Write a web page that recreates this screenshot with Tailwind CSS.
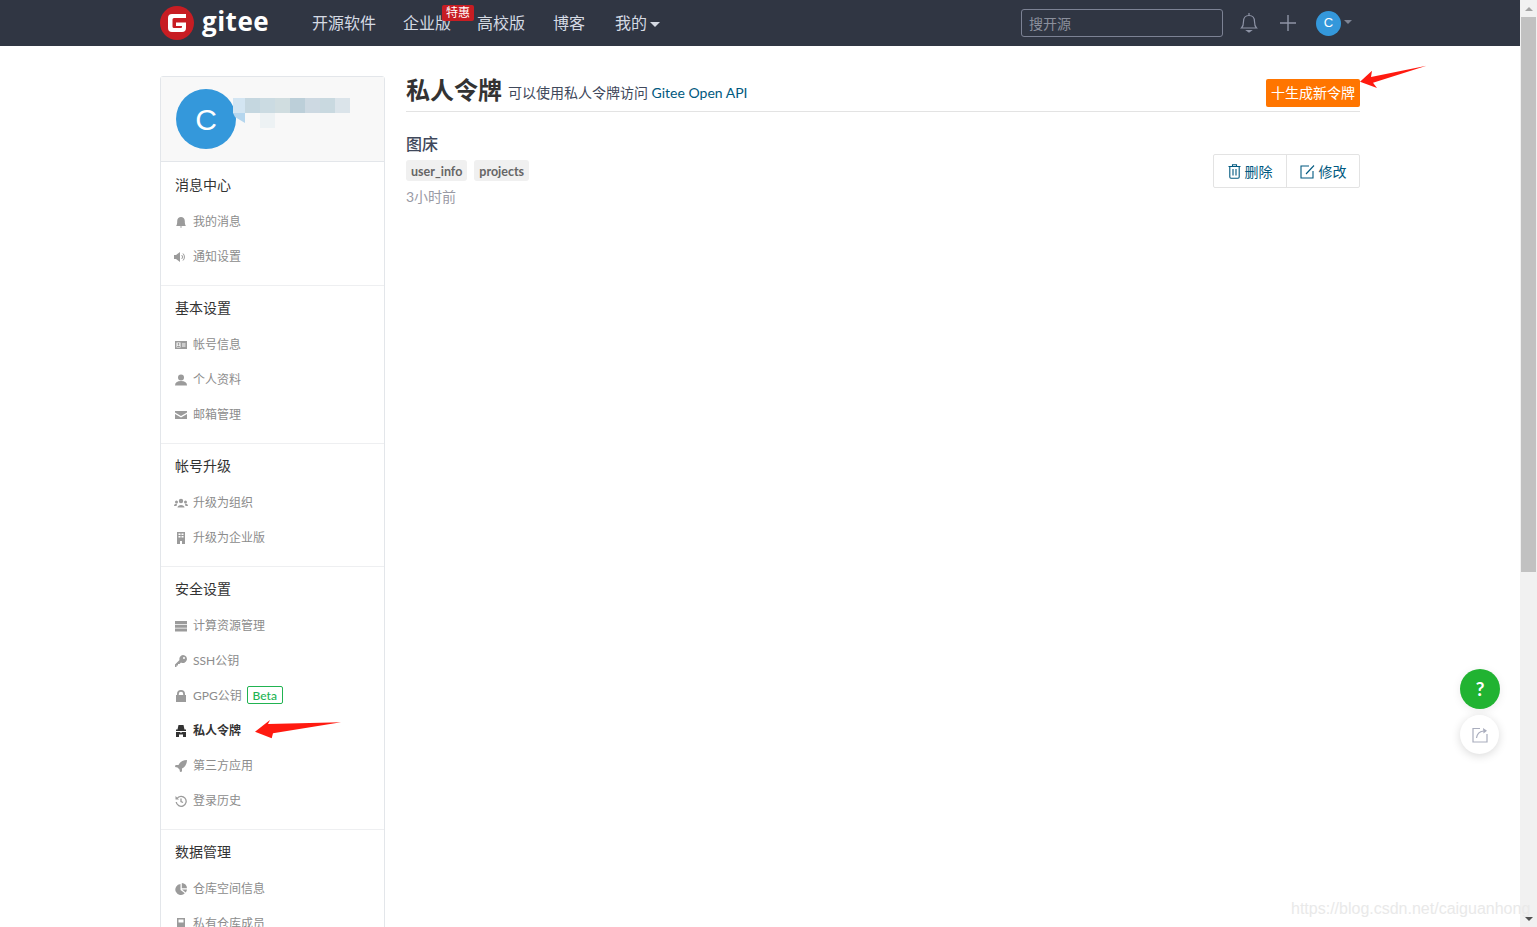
<!DOCTYPE html>
<html lang="zh-CN">
<head>
  <meta charset="UTF-8" />
  <title>私人令牌</title>
  <script src="https://cdn.jsdelivr.net/npm/@tailwindcss/browser@4"></script>
</head>
<body class="h-[927px] overflow-hidden bg-white font-['Lato','Noto_Sans_CJK_SC',sans-serif]">
  <div class="relative flex h-[927px] overflow-hidden">
    <div class="w-[1520px] shrink-0">
      <!-- Navbar -->
      <header class="flex h-[46px] items-center bg-[#303643] pl-[160px] pr-[168px] text-[16px] text-[#d5dae3]">
        <svg class="h-[34px] w-[34px] shrink-0" viewBox="0 0 34 34">
          <circle cx="17" cy="17" r="17" fill="#c71d23"/>
          <path d="M8 12a4 4 0 0 1 4-4h14v4H14a1.500 1.500 0 0 0-1.500 1.500v7A1.500 1.500 0 0 0 14 22h7a1 1 0 0 0 1-1v-1h-6v-3.500h10V22a4 4 0 0 1-4 4H12a4 4 0 0 1-4-4z" fill="#fff"/>
        </svg>
        <span class="ml-2 -mt-[5px] w-[110px] text-[26px] leading-[34px] font-bold tracking-[0.5px] text-white font-['Open_Sans',sans-serif]">gitee</span>
        <nav class="flex items-center">
          <a class="w-[91px]">开源软件</a>
          <a class="relative w-[74px]">企业版
            <span class="absolute left-[39px] top-[-6px] h-[16px] w-[32px] rounded-[2px] bg-[#c71d23] text-center text-[12px] leading-[16px] text-white">特惠</span>
          </a>
          <a class="w-[76px]">高校版</a>
          <a class="w-[62px]">博客</a>
          <a class="flex items-center">我的<span class="ml-[3px] mt-[3px] border-x-[5px] border-t-[5px] border-x-transparent border-t-[#d5dae3]"></span></a>
        </nav>
        <div class="ml-auto flex items-center">
          <div class="flex h-[28px] w-[202px] items-center rounded-[3px] border border-[#7c8294] pl-[7px] text-[14px] text-[#8b909c]">搜开源</div>
          <svg class="mb-[2px] ml-[17px] h-[22px] w-[18px] shrink-0" viewBox="0 0 18 22" fill="none" stroke="#8e94a6" stroke-width="1.2">
            <path d="M1.500 17c1.500-1.500 2-3 2-6.500 0-3.500 2-6 5.500-6s5.500 2.500 5.500 6c0 3.500.5 5 2 6.500z"/>
            <path d="M9 4.500V2"/>
            <path d="M7 19.500h4l-2 1.500z" fill="#8e94a6"/>
          </svg>
          <svg class="ml-[21px] h-[18px] w-[18px] shrink-0" viewBox="0 0 18 18" stroke="#8e94a6" stroke-width="1.400"><path d="M9 1v16M1 9h16"/></svg>
          <div class="ml-[19px] flex h-[25px] w-[25px] items-center justify-center rounded-full bg-[#3498db] text-[13px] text-white font-['Liberation_Sans',sans-serif]">C</div>
          <span class="ml-[3px] mb-[3px] border-x-[4px] border-t-[4px] border-x-transparent border-t-[#7d8393]"></span>
        </div>
      </header>

      <div class="flex items-start pl-[160px] pt-[30px]">
        <!-- Sidebar -->
        <aside class="h-[900px] w-[225px] shrink-0 rounded-t-[3px] border border-[#e3e6ea] text-[12px] text-[#8c8c8c]">
          <div class="relative flex h-[85px] items-center border-b border-[#e3e6ea] bg-[#f8f8f8] pl-[15px]">
            <div class="flex h-[60px] w-[60px] items-center justify-center rounded-full bg-[#3498db] text-[30px] text-white font-['Liberation_Sans',sans-serif]">C</div>
            <!-- pixelated username -->
            <div class="absolute left-[72px] top-[21px] flex h-[15px]">
              <span class="w-[12px] bg-[#d3e5f2]"></span><span class="w-[15px] bg-[#c5d7e0]"></span><span class="w-[15px] bg-[#cbdbe2]"></span><span class="w-[15px] bg-[#d0dde0]"></span><span class="w-[15px] bg-[#bccfd9]"></span><span class="w-[15px] bg-[#cdd9e2]"></span><span class="w-[15px] bg-[#c9d9e0]"></span><span class="w-[15px] bg-[#dbe4ea]"></span>
            </div>
            <div class="absolute left-[99px] top-[36px] h-[15px] w-[15px] bg-[#edf2f4]"></div>
            <svg class="absolute left-[72px] top-[36px] h-[10px] w-[12px]" viewBox="0 0 12 10"><path d="M0 0h12v10L2 4z" fill="#b5d6ee"/></svg>
          </div>

          <section class="px-[14px] pb-[11px] pt-[11px]">
            <h3 class="mb-[7px] text-[14px] leading-[24px] text-[#333]">消息中心</h3>
            <a class="flex h-[35px] items-center">
              <svg class="mr-[6px] h-[12px] w-[12px] shrink-0" viewBox="0 0 12 12" fill="#9b9b9b"><path d="M1 10c1-1 1.200-2.500 1.200-5C2.200 2.500 4 1 6 1s3.800 1.500 3.800 4c0 2.500.2 4 1.200 5z"/><path d="M4.800 10.500h2.400L6 12z"/></svg>我的消息</a>
            <a class="flex h-[35px] items-center">
              <svg class="-ml-[1px] mr-[6px] h-[12px] w-[13px] shrink-0" viewBox="0 0 13 12" fill="#9b9b9b"><path d="M0 4h2l4-3v10L2 8H0z"/><path d="M7.500 4a2.500 2.500 0 0 1 0 4M9 2.500a5 5 0 0 1 0 7" fill="none" stroke="#9b9b9b"/></svg>通知设置</a>
          </section>

          <section class="border-t border-[#eeeff1] px-[14px] pb-[11px] pt-[10px]">
            <h3 class="mb-[7px] text-[14px] leading-[24px] text-[#333]">基本设置</h3>
            <a class="flex h-[35px] items-center">
              <svg class="mr-[6px] h-[12px] w-[12px] shrink-0" viewBox="0 0 12 12" fill="#9b9b9b"><path fill-rule="evenodd" d="M0 2h12v8H0zM1.500 3.500v5h4v-5zm5.500 1v1h3.500v-1zm0 2v1h3.500v-1z"/><circle cx="3.500" cy="5" r="1"/><path d="M2 8c0-2 3-2 3 0z"/></svg>帐号信息</a>
            <a class="flex h-[35px] items-center">
              <svg class="mr-[6px] h-[12px] w-[12px] shrink-0" viewBox="0 0 12 12" fill="#9b9b9b"><circle cx="6" cy="3.500" r="3"/><path d="M0 11.500c0-3 2-4.500 6-4.500s6 1.500 6 4.500z"/></svg>个人资料</a>
            <a class="flex h-[35px] items-center">
              <svg class="mr-[6px] h-[12px] w-[12px] shrink-0" viewBox="0 0 12 12" fill="#9b9b9b"><path d="M0 2h12v1.500L6 7 0 3.500z"/><path d="M0 5l6 3.500L12 5v5H0z"/></svg>邮箱管理</a>
          </section>

          <section class="border-t border-[#eeeff1] px-[14px] pb-[11px] pt-[10px]">
            <h3 class="mb-[7px] text-[14px] leading-[24px] text-[#333]">帐号升级</h3>
            <a class="flex h-[35px] items-center">
              <svg class="-ml-[1px] mr-[5px] h-[12px] w-[14px] shrink-0" viewBox="0 0 14 12" fill="#9b9b9b"><circle cx="7" cy="4" r="2.200"/><circle cx="2.500" cy="5" r="1.500"/><circle cx="11.500" cy="5" r="1.500"/><path d="M3.500 10.500c0-3.500 7-3.500 7 0z"/><path d="M0 9c0-2 2-2.500 3-2l-.5 2zM14 9c0-2-2-2.500-3-2l.5 2z"/></svg>升级为组织</a>
            <a class="flex h-[35px] items-center">
              <svg class="mr-[6px] h-[12px] w-[12px] shrink-0" viewBox="0 0 12 12" fill="#9b9b9b"><path fill-rule="evenodd" d="M2 0h8v12H7V9H5v3H2zM3.500 1.500v1.500h2V1.500zm3 0v1.500h2V1.500zm-3 2.500v1.500h2V4zm3 0v1.500h2V4z"/></svg>升级为企业版</a>
          </section>

          <section class="border-t border-[#eeeff1] px-[14px] pb-[11px] pt-[10px]">
            <h3 class="mb-[7px] text-[14px] leading-[24px] text-[#333]">安全设置</h3>
            <a class="flex h-[35px] items-center">
              <svg class="mr-[6px] h-[12px] w-[12px] shrink-0" viewBox="0 0 12 12" fill="#9b9b9b"><path d="M0 1h12v3H0zM0 4.700h12v3H0zM0 8.400h12v3H0z"/></svg>计算资源管理</a>
            <a class="flex h-[35px] items-center">
              <svg class="mr-[6px] h-[12px] w-[12px] shrink-0" viewBox="0 0 12 12" fill="#9b9b9b"><path fill-rule="evenodd" d="M8 0a4 4 0 1 1-2 7.500L4.500 9H3v1.500H1.500V12H0V9.500l4.500-4.500A4 4 0 0 1 8 0zm1 2a1 1 0 1 0 0 2 1 1 0 0 0 0-2z"/></svg>SSH公钥</a>
            <a class="flex h-[35px] items-center">
              <svg class="mr-[6px] h-[12px] w-[12px] shrink-0" viewBox="0 0 12 12" fill="#9b9b9b"><path fill-rule="evenodd" d="M2 5V4a4 4 0 0 1 8 0v1h1v7H1V5zm1.800 0h4.400V4a2.200 2.200 0 0 0-4.400 0z"/></svg>GPG公钥<span class="ml-[5px] mb-[1px] h-[18px] w-[36px] rounded-[2px] border border-[#21b351] text-center text-[12px] leading-[17px] font-medium text-[#21b351]">Beta</span></a>
            <a class="flex h-[35px] items-center font-bold text-[#333]">
              <svg class="mr-[6px] h-[12px] w-[12px] shrink-0" viewBox="0 0 12 12" fill="#333"><path d="M3.500 0h5l1 4.500H11V6H1V4.500h1.500z"/><path d="M1 7h4.500v1h1V7H11v5H8V9.500H4V12H1z"/></svg>私人令牌</a>
            <a class="flex h-[35px] items-center">
              <svg class="mr-[6px] h-[12px] w-[12px] shrink-0" viewBox="0 0 12 12" fill="#9b9b9b"><path d="M12 0c0 4-2 7-5 8.500V11.500L5 12l-.5-2.500-2-2L0 7l.5-2H3.500C5 2 8 0 12 0z"/></svg>第三方应用</a>
            <a class="flex h-[35px] items-center">
              <svg class="mr-[6px] h-[12px] w-[12px] shrink-0" viewBox="0 0 12 12" fill="none" stroke="#9b9b9b" stroke-width="1.300"><path d="M2 3.500a5 5 0 1 1-.8 3.500"/><path d="M6 3.500V6.500l2 1"/><path d="M.5 1v3.500H4z" fill="#9b9b9b" stroke="none"/></svg>登录历史</a>
          </section>

          <section class="border-t border-[#eeeff1] px-[14px] pb-[11px] pt-[10px]">
            <h3 class="mb-[7px] text-[14px] leading-[24px] text-[#333]">数据管理</h3>
            <a class="flex h-[35px] items-center">
              <svg class="mr-[6px] h-[12px] w-[12px] shrink-0" viewBox="0 0 12 12" fill="#9b9b9b"><path d="M5.500 1v6l4.300 3.300A5.500 5.500 0 1 1 5.500 1z"/><path d="M6.800 0A5.200 5.200 0 0 1 12 5.200H6.800z"/><path d="M7 6.500h5a5.500 5.500 0 0 1-1.300 3z"/></svg>仓库空间信息</a>
            <a class="flex h-[35px] items-center">
              <svg class="mr-[6px] h-[12px] w-[12px] shrink-0" viewBox="0 0 12 12" fill="#9b9b9b"><path fill-rule="evenodd" d="M2 0h8v12H7V9H5v3H2zM3.500 1.500v3h5v-3z"/></svg>私有仓库成员</a>
          </section>
        </aside>

        <!-- Main -->
        <main class="ml-[21px] w-[954px] shrink-0">
          <div class="flex h-[36px] items-start justify-between border-b border-[#e3e3e3]">
            <div class="flex items-baseline">
              <h1 class="text-[24px] leading-[28px] font-bold text-[#333]">私人令牌</h1>
              <p class="ml-[6px] -translate-y-[1px] text-[14px] text-[#40485b]">可以使用私人令牌访问 <a class="text-[#005980]">Gitee Open API</a></p>
            </div>
            <button class="mt-[3px] h-[28px] w-[94px] rounded-[2px] bg-[#ff7500] text-center text-[14px] leading-[28px] whitespace-nowrap text-white">十生成新令牌</button>
          </div>
          <div class="flex items-start justify-between">
            <div class="pt-[20px]">
              <h2 class="text-[16px] leading-[24px] font-medium text-[#40485b]">图床</h2>
              <div class="mt-[4px] flex gap-[7px]">
                <span class="h-[21px] rounded-[3px] bg-[#f0f0f0] px-[5px] text-[12.500px] leading-[23px] font-bold text-[#666]">user_info</span>
                <span class="h-[21px] rounded-[3px] bg-[#f0f0f0] px-[5px] text-[12.500px] leading-[23px] font-bold text-[#666]">projects</span>
              </div>
              <p class="mt-[5px] text-[14px] leading-[22px] text-[#9a9aa5]">3小时前</p>
            </div>
            <div class="mt-[42px] flex h-[34px] rounded-[2px] border border-[#e3e3e3] text-[14px] text-[#005980]">
              <button class="flex w-[73px] items-center justify-center border-r border-[#e3e3e3]">
                <svg class="mr-[4px] h-[15px] w-[13px]" viewBox="0 0 13 15" fill="none" stroke="#005980" stroke-width="1.100"><path d="M.5 2.500h12M4.500 2.500V.8h4v1.700M1.800 2.500v10.500a1.200 1.200 0 0 0 1.200 1.200h7a1.200 1.200 0 0 0 1.200-1.200V2.500M5 5v6.500M8 5v6.500"/></svg>删除</button>
              <button class="flex w-[72px] items-center justify-center">
                <svg class="mr-[4px] h-[15px] w-[15px]" viewBox="0 0 15 15" fill="none" stroke="#005980" stroke-width="1.100"><path d="M9 2H1v12h12V7"/><path d="M6 10l8-8.500"/></svg>修改</button>
            </div>
          </div>
        </main>
      </div>
    </div>

    <!-- Browser scrollbar -->
    <div class="flex w-[17px] shrink-0 flex-col items-center bg-[#f1f1f1]">
      <div class="flex h-[17px] items-center"><span class="border-x-[4px] border-b-[4px] border-x-transparent border-b-[#a3a3a3]"></span></div>
      <div class="h-[555px] w-[15px] bg-[#c1c1c1]"></div>
      <div class="mt-auto flex h-[17px] items-center"><span class="border-x-[4px] border-t-[4px] border-x-transparent border-t-[#505050]"></span></div>
    </div>

    <!-- Floating buttons -->
    <div class="absolute left-[1460px] top-[669px] flex h-[40px] w-[40px] items-center justify-center rounded-full bg-[#21b332] text-[19px] font-bold text-white shadow-[0_2px_10px_rgba(0,0,0,0.08)]">?</div>
    <div class="absolute left-[1460px] top-[715px] flex h-[39px] w-[39px] items-center justify-center rounded-full bg-white shadow-[0_2px_10px_rgba(0,0,0,0.15)]">
      <svg class="h-[16px] w-[16px]" viewBox="0 0 16 16" fill="none" stroke="#a9adbd" stroke-width="1.200"><path d="M8 1.500H1v13.500h14V7"/><path d="M4.500 11c.5-4 3-6.500 7-7"/><path d="M11 1l4 2.800-3.500 2.700z" fill="#a9adbd" stroke="none"/></svg>
    </div>

    <!-- Annotation arrows -->
    <svg class="absolute left-[1358px] top-[64px] h-[28px] w-[70px]" viewBox="0 0 70 28"><path d="M68.500 1.700 L15 18.700 L19 24 L2 17.700 L14 6.700 L13 13 Z" fill="#ff1a10"/></svg>
    <svg class="absolute left-[254px] top-[719px] h-[22px] w-[88px]" viewBox="0 0 88 22"><path d="M87 3.300 L19 14.300 L17.700 19.300 L1 12.700 L16 1 L14 5 Z" fill="#ff1a10"/></svg>

    <!-- Watermark -->
    <div class="absolute left-[1291px] top-[897px] text-[16px] leading-[24px] whitespace-nowrap text-[#e9e9e9] font-['Liberation_Sans',sans-serif]">https://blog.csdn.net/caiguanhong</div>
  </div>
</body>
</html>
